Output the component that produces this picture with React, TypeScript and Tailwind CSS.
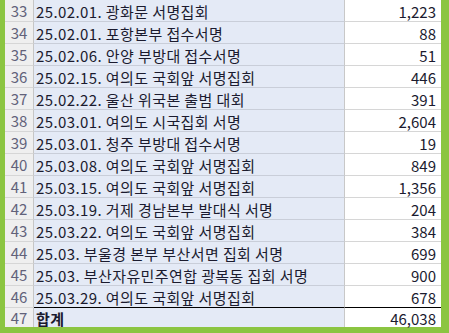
const rows: [number, string, string][] = [
  [33, "25.02.01. 광화문 서명집회", "1,223"],
  [34, "25.02.01. 포항본부 접수서명", "88"],
  [35, "25.02.06. 안양 부방대 접수서명", "51"],
  [36, "25.02.15. 여의도 국회앞 서명집회", "446"],
  [37, "25.02.22. 울산 위국본 출범 대회", "391"],
  [38, "25.03.01. 여의도 시국집회 서명", "2,604"],
  [39, "25.03.01. 청주 부방대 접수서명", "19"],
  [40, "25.03.08. 여의도 국회앞 서명집회", "849"],
  [41, "25.03.15. 여의도 국회앞 서명집회", "1,356"],
  [42, "25.03.19. 거제 경남본부 발대식 서명", "204"],
  [43, "25.03.22. 여의도 국회앞 서명집회", "384"],
  [44, "25.03. 부울경 본부 부산서면 집회 서명", "699"],
  [45, "25.03. 부산자유민주연합 광복동 집회 서명", "900"],
  [46, "25.03.29. 여의도 국회앞 서명집회", "678"],
];

export default function App() {
  return (
    <div
      className="w-[449px] h-[333px] bg-[#8bc541] pl-[5px] pr-[6px] overflow-hidden text-[15px] leading-none text-[#1b1b2f]"
      style={{ fontFamily: '"Noto Sans CJK KR", "Noto Sans", sans-serif' }}
    >
      <div className="flex flex-col">
        {rows.map(([n, label, value], i) => (
          <div key={n} className="flex h-[22px]">
            <div className="w-[29px] shrink-0 flex items-center justify-center bg-[#efefef] text-[#62627a] border-r border-r-[#c6c6c6] border-b border-b-[#d6d6d6]">
              {n}
            </div>
            <div
              className={`w-[311px] shrink-0 flex items-center pl-[2px] pt-[1px] bg-[#e4eaf6] border-r border-r-[#c8c8c8] border-b whitespace-nowrap tracking-[0.4px] ${
                i === rows.length - 1 ? "border-b-black" : "border-b-[#c9ced9]"
              }`}
            >
              {label}
            </div>
            <div
              className={`w-[96px] shrink-0 flex items-center justify-end pr-[5px] pt-[1px] bg-white border-b ${
                i === rows.length - 1 ? "border-b-black" : "border-b-[#d6d6d6]"
              }`}
            >
              {value}
            </div>
          </div>
        ))}
        <div className="flex h-[19px]">
          <div className="w-[29px] shrink-0 flex items-center justify-center bg-[#efefef] text-[#62627a] border-r border-r-[#c6c6c6]">
            47
          </div>
          <div className="w-[311px] shrink-0 flex items-center pl-[2px] pt-[1px] bg-[#e4eaf6] border-r border-r-[#c8c8c8] font-bold tracking-[0.4px]">
            합계
          </div>
          <div className="w-[96px] shrink-0 flex items-center justify-end pr-[5px] pt-[1px] bg-white">
            46,038
          </div>
        </div>
      </div>
    </div>
  );
}
